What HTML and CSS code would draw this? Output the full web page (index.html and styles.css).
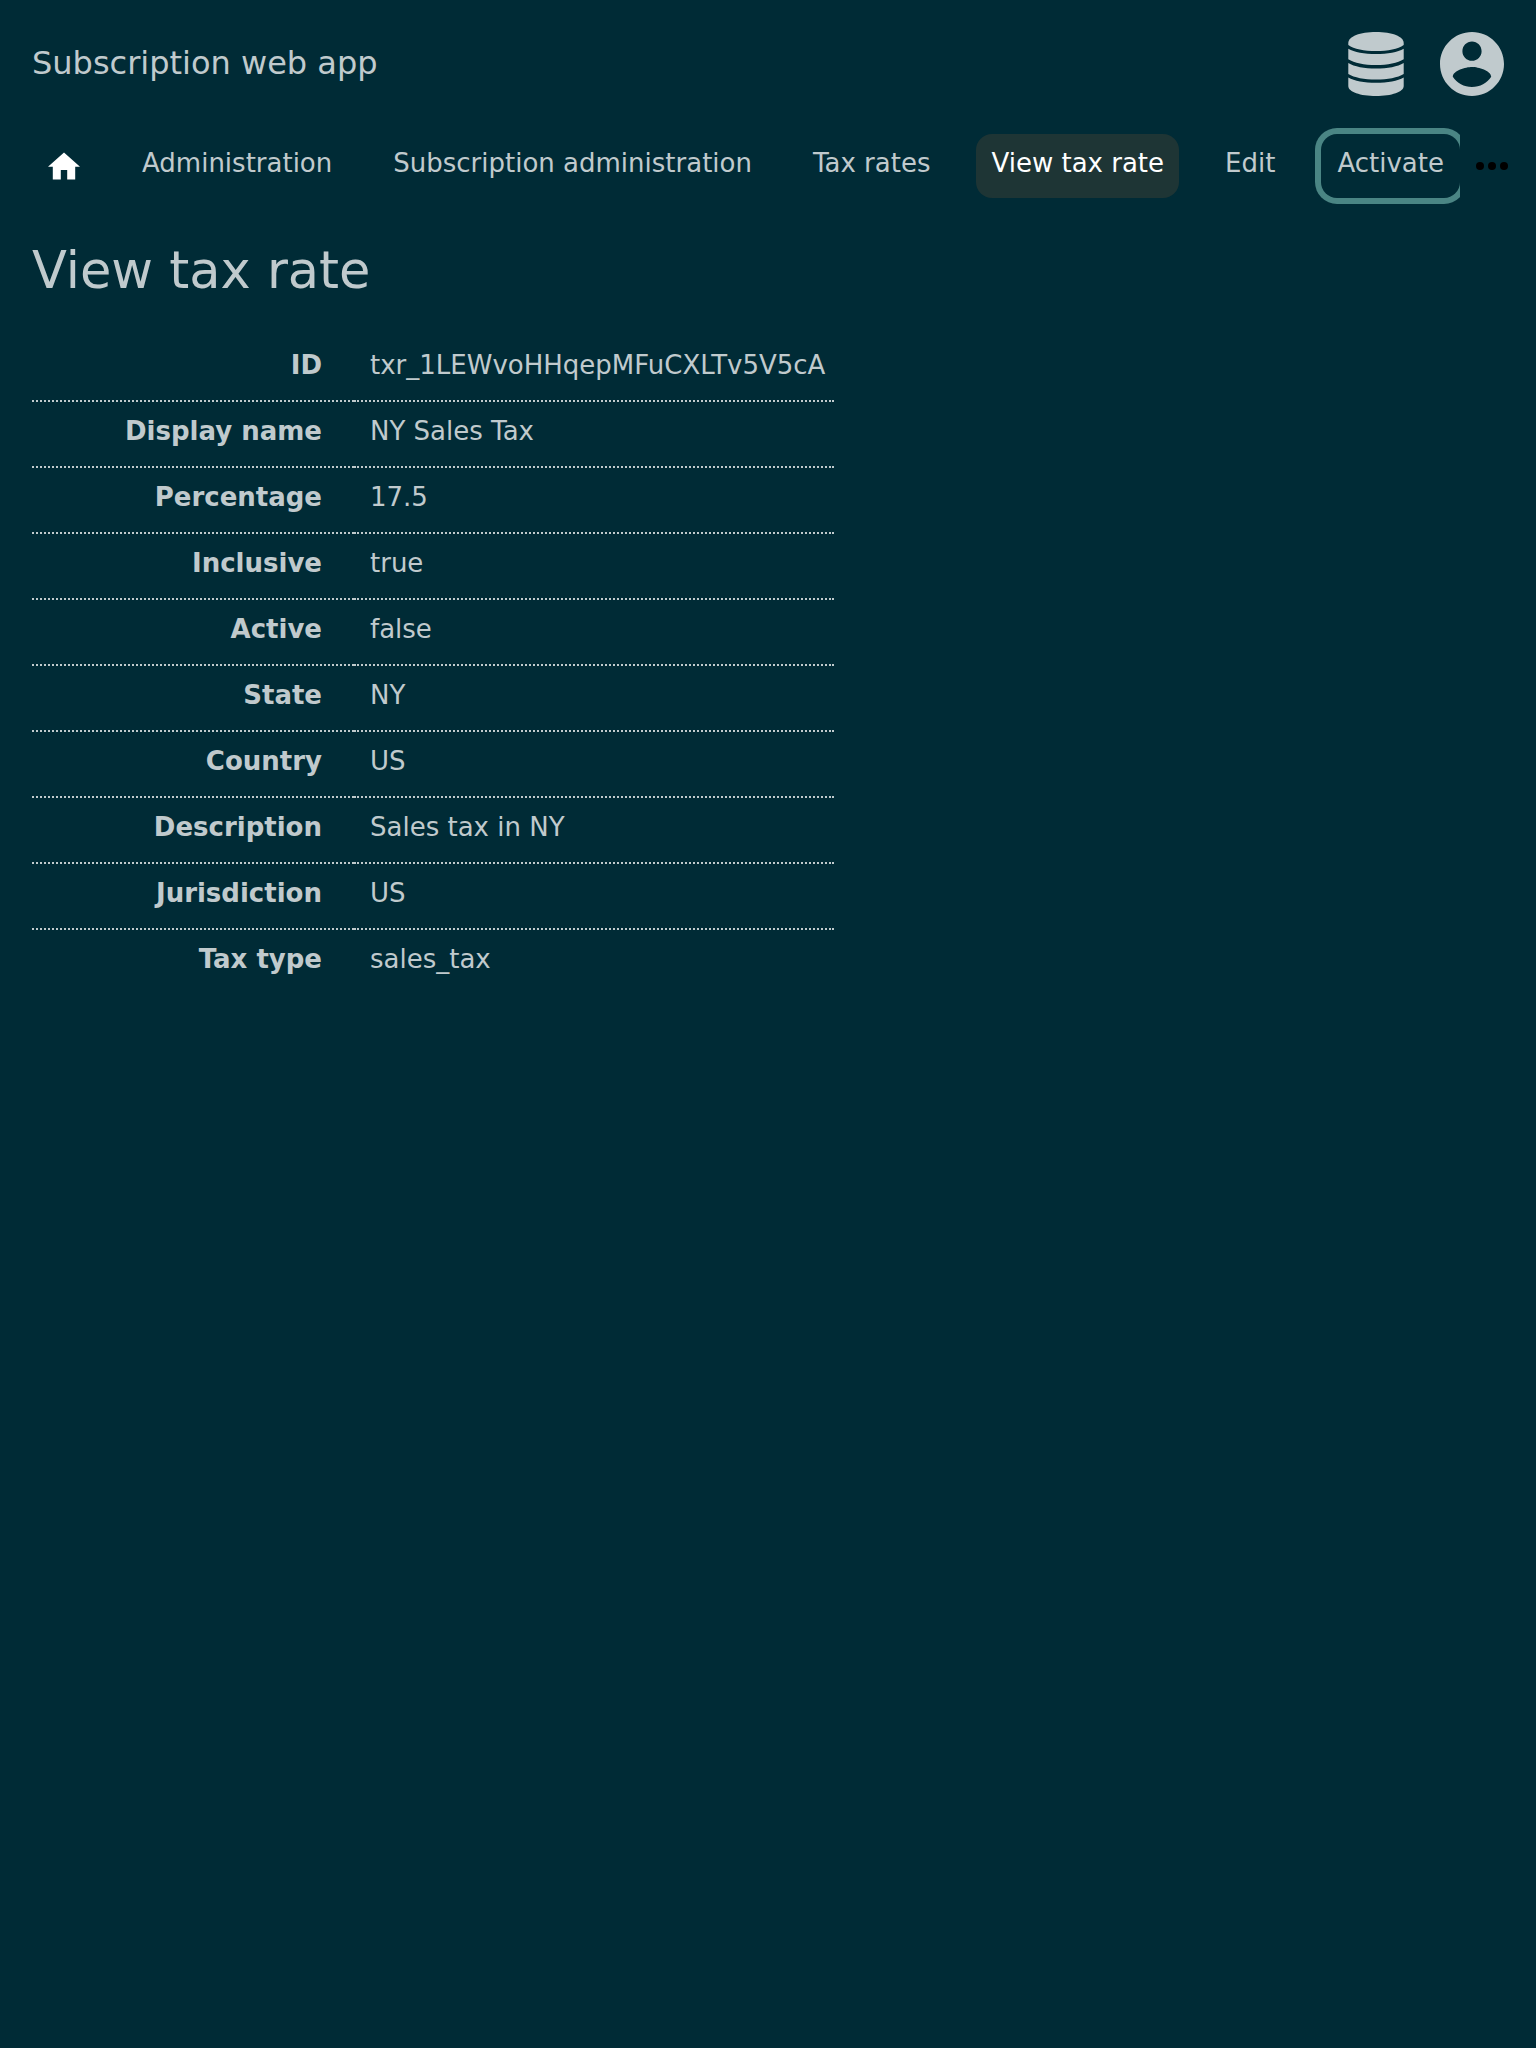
FILE: index.html
```html
<!DOCTYPE html>
<html lang="en">
<head>
<meta charset="utf-8">
<meta name="viewport" content="width=device-width, initial-scale=1">
<title>View tax rate</title>
<link rel="stylesheet" href="styles.css">
</head>
<body>
<header class="header">
  <a class="brand" href="#">Subscription web app</a>
  <div class="header-actions">
    <button class="icon-button" type="button" aria-label="Administration menu">
      <svg class="icon-large" viewBox="-4 0 64 64" aria-hidden="true">
        <path d="M0.300 11C0.300 4.500 12 0 28 0s27.700 4.500 27.700 11v2C50 17 40 19 28 19S6 17 0.300 13z"/>
        <path d="M0.300 16.700c6 3.500 16 5.300 27.700 5.300s21.700-1.800 27.700-5.300v10.500c-6 3.800-16 5.800-27.700 5.800S6.300 31 0.300 27.200z"/>
        <path d="M0.300 31c6 3.700 16 5.500 27.700 5.500S49.700 34.700 55.700 31v11c-6 3.700-16 5.500-27.700 5.500S6.300 45.700 0.300 42z"/>
        <path d="M0.300 45.500c6 3.500 16 5.300 27.700 5.300s21.700-1.800 27.700-5.300V54c0 6-12 10-27.700 10S0.300 60 0.300 54z"/>
      </svg>
    </button>
    <button class="icon-button" type="button" aria-label="Account menu">
      <svg class="icon-large" viewBox="2 2 20 20" aria-hidden="true">
        <path d="M12 2C6.480 2 2 6.480 2 12s4.480 10 10 10 10-4.480 10-10S17.520 2 12 2zm0 3c1.660 0 3 1.340 3 3s-1.340 3-3 3-3-1.340-3-3 1.340-3 3-3zm0 14.200c-2.500 0-4.710-1.280-6-3.220.03-1.990 4-3.080 6-3.080 1.990 0 5.970 1.090 6 3.080-1.290 1.940-3.500 3.220-6 3.220z"/>
      </svg>
    </button>
  </div>
</header>
<div class="navbar">
  <nav class="nav" aria-label="Main">
    <a class="nav-link nav-home" href="#" aria-label="Home">
      <svg class="icon-small" viewBox="2 1.500 20 20" aria-hidden="true">
        <path d="M10 20v-6h4v6h5v-8h3L12 3 2 12h3v8z"/>
      </svg>
    </a>
    <a class="nav-link" href="#">Administration</a>
    <a class="nav-link" href="#">Subscription administration</a>
    <a class="nav-link" href="#">Tax rates</a>
    <a class="nav-link nav-current" href="#" aria-current="page">View tax rate</a>
    <a class="nav-link" href="#">Edit</a>
    <a class="nav-link nav-highlight" href="#">Activate</a>
  </nav>
  <button class="more" type="button" aria-label="More">
    <svg class="icon-small" viewBox="0 0 32 32" aria-hidden="true">
      <circle cx="4" cy="16" r="4"/><circle cx="16" cy="16" r="4"/><circle cx="28" cy="16" r="4"/>
    </svg>
  </button>
</div>
<main class="content">
  <h1 class="title">View tax rate</h1>
  <table class="details">
    <tbody>
      <tr><th scope="row">ID</th><td>txr_1LEWvoHHqepMFuCXLTv5V5cA</td></tr>
      <tr><th scope="row">Display name</th><td>NY Sales Tax</td></tr>
      <tr><th scope="row">Percentage</th><td>17.5</td></tr>
      <tr><th scope="row">Inclusive</th><td>true</td></tr>
      <tr><th scope="row">Active</th><td>false</td></tr>
      <tr><th scope="row">State</th><td>NY</td></tr>
      <tr><th scope="row">Country</th><td>US</td></tr>
      <tr><th scope="row">Description</th><td>Sales tax in NY</td></tr>
      <tr><th scope="row">Jurisdiction</th><td>US</td></tr>
      <tr><th scope="row">Tax type</th><td>sales_tax</td></tr>
    </tbody>
  </table>
</main>
</body>
</html>
```
FILE: styles.css
```css
:root {
  --background: #002b36;
  --text: #c0cacd;
}

* {
  box-sizing: border-box;
}

body {
  margin: 0;
  background: var(--background);
  color: var(--text);
  font-family: "DejaVu Sans", sans-serif;
  font-size: 26px;
  line-height: 32px;
}

a {
  color: inherit;
  text-decoration: none;
}

button {
  padding: 0;
  border: 0;
  background: none;
  color: inherit;
}

svg {
  display: block;
  fill: currentColor;
}

.icon-large {
  width: 64px;
  height: 64px;
}

.icon-small {
  width: 32px;
  height: 32px;
}

.header {
  display: flex;
  align-items: center;
  justify-content: space-between;
  padding: 32px;
}

.brand {
  padding-bottom: 2px;
  font-size: 32px;
}

.header-actions {
  display: flex;
  gap: 32px;
}

.navbar {
  display: flex;
  align-items: center;
  padding: 0 12px 0 32px;
}

.nav {
  display: flex;
  flex: 1;
  gap: 31px;
  min-width: 0;
  padding: 6px 0;
  overflow: hidden;
}

.nav-link {
  flex: none;
  padding: 13px 15px 19px;
  border-radius: 16px;
  white-space: nowrap;
}

.nav-home {
  padding: 16px;
  color: #fff;
}

.nav-current {
  background: #1e3535;
  color: #fff;
}

.nav-highlight {
  padding-right: 16px;
  padding-left: 16px;
  box-shadow: 0 0 0 6px #4a8584;
}

.more {
  flex: none;
  padding: 16px;
  color: #000;
}

.content {
  padding: 35px 32px;
}

.title {
  margin: 0 0 33px;
  font-size: 51px;
  font-weight: 400;
  line-height: 64px;
}

.details {
  border-spacing: 0;
}

.details th,
.details td {
  padding: 13px 9px 19px 16px;
  border-bottom: 2px dotted var(--text);
  text-align: left;
}

.details th {
  width: 322px;
  padding-right: 32px;
  text-align: right;
}

.details tr:last-child > * {
  border-bottom: 0;
}
```
